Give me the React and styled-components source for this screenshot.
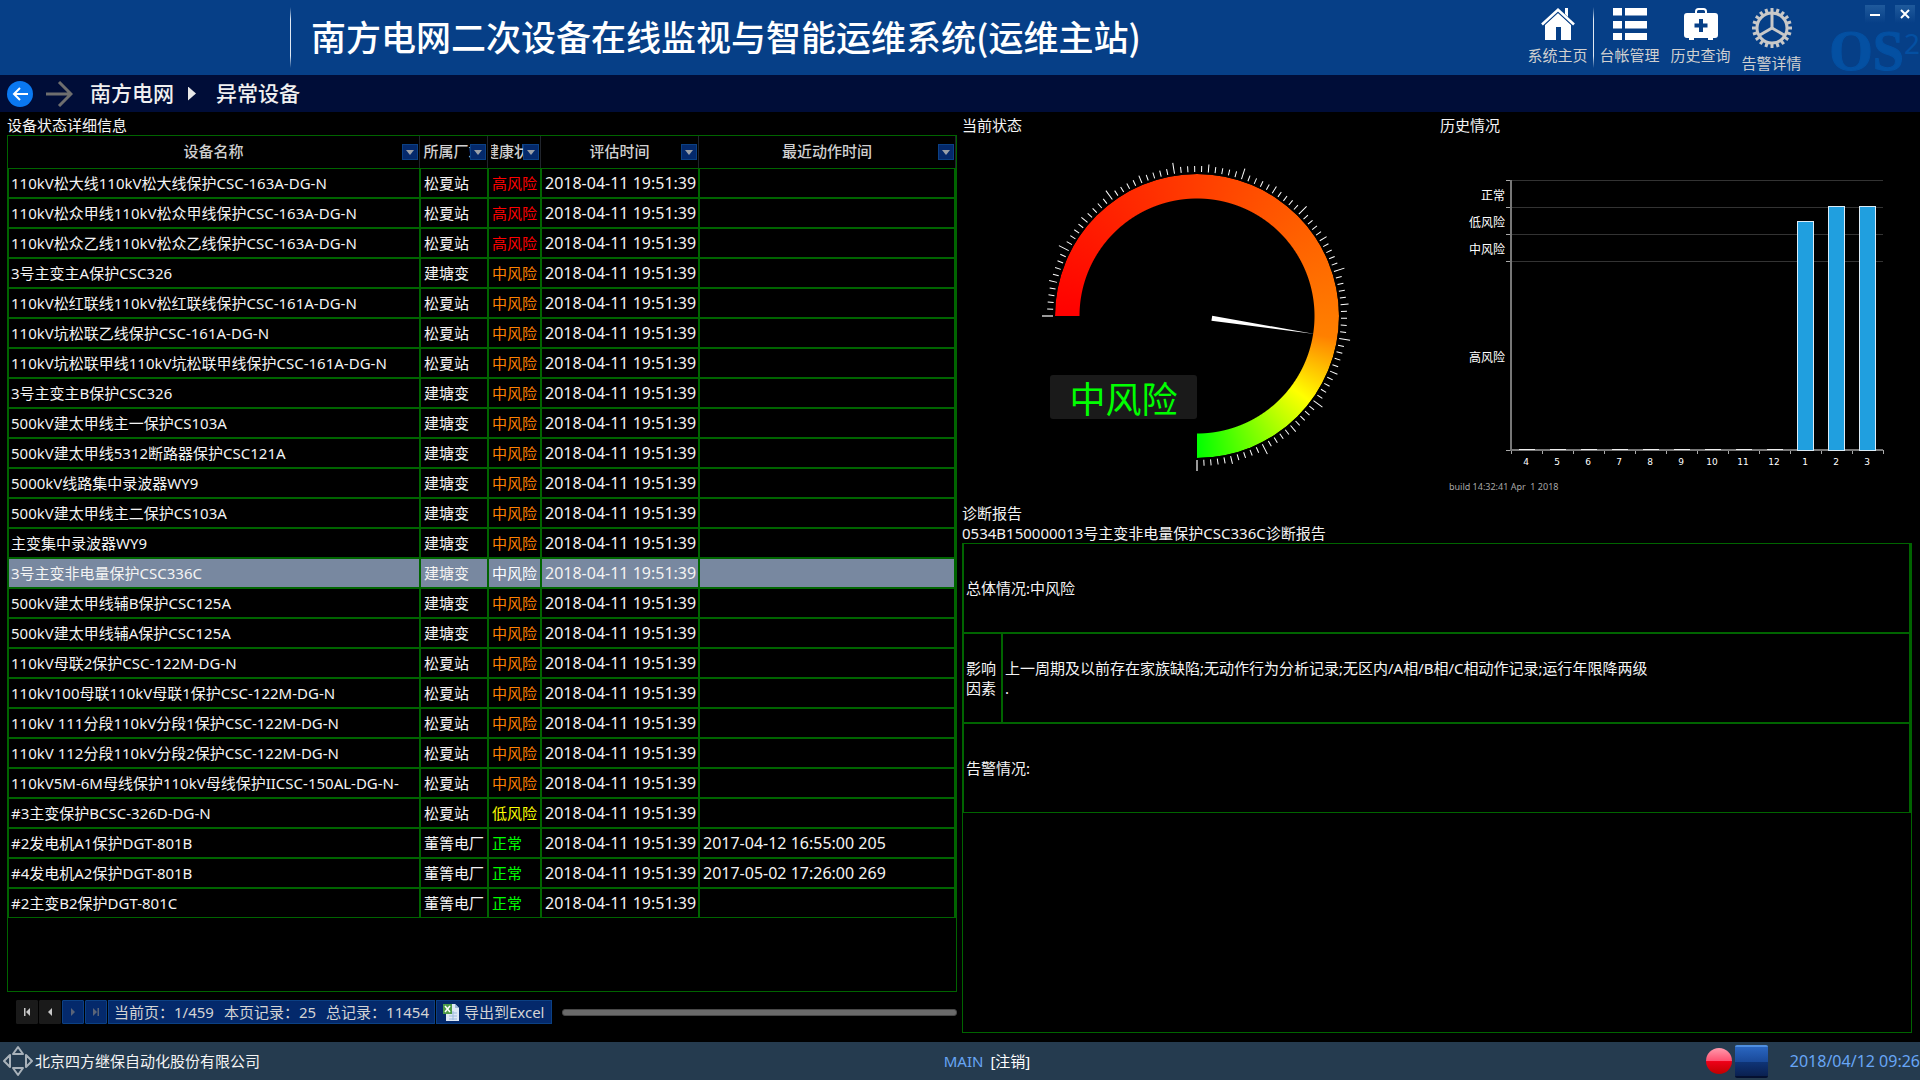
import React from 'react';
import styled, { createGlobalStyle } from 'styled-components';

const sans = "'Noto Sans', 'Noto Sans CJK SC', sans-serif";
const line = '#006400';

const statusColor = {
  高风险: '#ff0000',
  中风险: '#ff8000',
  低风险: '#ffff00',
  正常: '#00ff00',
};

const GlobalStyle = createGlobalStyle`
  * {
    box-sizing: border-box;
  }
  body {
    margin: 0;
    background: #000;
    color: #f4f4f4;
    font-family: ${sans};
    font-size: 15px;
    line-height: 20px;
  }
  button {
    padding: 0;
    border: 0;
    background: none;
    color: inherit;
    font: inherit;
  }
`;

const Page = styled.div`
  display: flex;
  flex-direction: column;
  min-height: 100vh;
`;

const TopBar = styled.header`
  position: relative;
  display: flex;
  align-items: flex-start;
  height: 75px;
  background: #063f87;
`;
const TopDivider = styled.span`
  width: 1px;
  height: 61px;
  margin-top: 7px;
  background: linear-gradient(transparent, #dfe8f2 20%, #dfe8f2 80%, transparent);
`;
const LogoSpace = styled.div`
  width: 290px;
`;
const Title = styled.h1`
  flex: 1;
  margin: 0;
  padding-left: 20px;
  color: #fff;
  font-family: 'Noto Sans CJK SC', sans-serif;
  font-size: 35px;
  font-weight: 500;
  line-height: 71px;
  white-space: nowrap;
`;
const Nav = styled.nav`
  display: flex;
  margin-right: 113px;
`;
const NavLink = styled.a`
  display: flex;
  flex-direction: column;
  align-items: center;
  width: 71px;
  padding-top: 8px;
  color: #d0d0d0;
  text-decoration: none;
  line-height: 30px;
`;
const Watermark = styled.div`
  position: absolute;
  top: 23px;
  right: 0;
  display: flex;
  color: #0450a2;
  font-family: 'Liberation Serif', serif;
  font-size: 56px;
  font-weight: bold;
  line-height: 56px;
  -webkit-text-stroke: 1px #0450a2;
`;
const WatermarkPower = styled.span`
  font-family: ${sans};
  font-size: 28px;
  font-weight: normal;
  line-height: 40px;
  -webkit-text-stroke: 0;
`;
const WindowButtons = styled.div`
  position: absolute;
  top: 5px;
  right: 5px;
  display: flex;
  gap: 10px;
`;
const WindowButton = styled.button`
  display: flex;
  align-items: center;
  justify-content: center;
  width: 20px;
  height: 18px;
  background: linear-gradient(#1f5a9c, #063f87);
`;

const Crumbs = styled.nav`
  display: flex;
  align-items: center;
  height: 37px;
  padding-left: 7px;
  background: #000d38;
  font-family: 'Noto Sans CJK SC', sans-serif;
  font-size: 21px;
  font-weight: 500;
`;
const CrumbButton = styled.button`
  display: flex;
  margin-right: ${(props) => props.$gap}px;
`;
const CrumbLink = styled.a`
  padding-bottom: 4px;
  color: #f0f0f0;
  text-decoration: none;
`;
const CrumbArrow = styled.span`
  width: 8px;
  height: 14px;
  margin: 0 20px 0 14px;
  background: #e8e8e8;
  clip-path: polygon(0 0, 100% 50%, 0 100%);
`;

const Main = styled.main`
  display: grid;
  grid-template-columns: 950fr 950fr;
  gap: 5px;
  flex: 1;
  padding: 3px 8px 9px 7px;
`;
const Column = styled.section`
  display: flex;
  flex-direction: column;
  min-width: 0;
`;
const SectionTitle = styled.h2`
  margin: 0;
  font-size: 15px;
  font-weight: normal;
  line-height: 20px;
`;
const Panel = styled.div`
  flex: 1;
  border: 1px solid ${line};
`;

const DeviceTable = styled.table`
  width: 100%;
  border-spacing: 0;
  table-layout: fixed;
`;
const HeadCell = styled.th`
  height: 32px;
  padding: 0;
  border-right: 1px solid #20242c;
  color: #d0d0d0;
  font-family: 'Noto Sans CJK SC', sans-serif;
  font-weight: 500;
`;
const HeadInner = styled.div`
  position: relative;
  padding: 0 3px;
`;
const HeadText = styled.span`
  display: flex;
  justify-content: center;
  height: 22px;
  overflow: hidden;
  line-height: 20px;
  white-space: nowrap;
`;
const FilterButton = styled.button`
  position: absolute;
  top: 3px;
  right: 1px;
  display: flex;
  align-items: center;
  justify-content: center;
  width: 16px;
  height: 16px;
  border: 1px solid #0b4084;
  background: #04296b;
`;
const Row = styled.tr`
  background: ${(props) => (props.$selected ? '#7888a0' : 'transparent')};
`;
const Cell = styled.td`
  height: 30px;
  padding: 0 3px;
  border: 1px solid ${line};
  overflow: hidden;
  color: ${(props) => props.$color || 'inherit'};
  font-size: ${(props) => (props.$date ? 16 : 15)}px;
  white-space: nowrap;
  &:first-child {
    padding: 0 2px;
  }
  &:last-child {
    border-right-width: 2px;
  }
`;

const Pager = styled.div`
  display: flex;
  align-items: center;
  gap: 1px;
  height: 41px;
  padding: 0 0 1px 9px;
`;
const PagerButton = styled.button`
  display: flex;
  align-items: center;
  justify-content: center;
  width: 22px;
  height: 24px;
  border: 1px solid ${(props) => (props.$off ? '#1a1a1a' : '#0b4084')};
  border-radius: 1px;
  background: ${(props) => (props.$off ? '#1a1a1a' : '#04296b')};
`;
const PagerInfo = styled.span`
  display: flex;
  gap: 10px;
  height: 24px;
  padding: 0 5px;
  border: 1px solid #0b4084;
  background: #04296b;
  color: #d4d4d4;
  line-height: 22px;
  white-space: nowrap;
`;
const ExportButton = styled.button`
  display: flex;
  align-items: center;
  gap: 5px;
  height: 24px;
  padding: 0 6px;
  border: 1px solid #0b4084;
  background: #04296b;
  color: #d4d4d4;
  line-height: 22px;
  white-space: nowrap;
`;
const ScrollTrack = styled.div`
  flex: 1;
  height: 7px;
  margin-left: 9px;
  border: 1px solid #484848;
  border-radius: 3px;
  background: #6a6a6a;
`;

const Charts = styled.div`
  display: grid;
  grid-template-columns: 478fr 472fr;
  height: 388px;
`;
const ChartBox = styled.div`
  min-width: 0;
`;
const Gauge = styled.div`
  display: grid;
  width: 320px;
  height: 320px;
  margin: 21px 0 0 75px;
  > * {
    grid-area: 1 / 1;
  }
`;
const GaugeRing = styled.div`
  width: 284px;
  height: 284px;
  place-self: center;
  border-radius: 50%;
  background: conic-gradient(from 270deg, #ff0000, #ff8000 189deg, #ffff00 217deg, #00ff00 270deg, transparent 270deg);
  mask: radial-gradient(circle, transparent 117px, #000 118px);
`;
const GaugeLabel = styled.div`
  place-self: end start;
  width: 147px;
  height: 44px;
  margin: 0 0 57px 13px;
  border-radius: 3px;
  background: #1a1a1a;
  color: #00ff00;
  font-family: 'Noto Sans CJK SC', sans-serif;
  font-size: 36px;
  line-height: 44px;
  text-align: center;
`;
const ChartSvg = styled.svg`
  display: block;
  margin: 10px 0 0 5px;
`;
const BuildInfo = styled.div`
  margin-top: 6px;
  padding-left: 9px;
  color: #a8a8a8;
  font-size: 9px;
  line-height: 12px;
`;

const Report = styled.table`
  width: 100%;
  border-spacing: 0;
  table-layout: fixed;
`;
const ReportCell = styled.td`
  height: 90px;
  padding: 2px;
  border: 1px solid ${line};
  &:last-child {
    border-right-width: 2px;
  }
  tr:first-child > & {
    height: 89px;
    border-top: 0;
  }
`;

const Footer = styled.footer`
  display: grid;
  grid-template-columns: 1fr auto 1fr;
  align-items: center;
  height: 38px;
  background: #253b4f;
`;
const Company = styled.div`
  display: flex;
  align-items: center;
  gap: 1px;
  padding-left: 2px;
`;
const User = styled.div`
  display: flex;
  gap: 7px;
  padding-left: 54px;
  color: #68a6f6;
`;
const Logout = styled.a`
  color: #fff;
  text-decoration: none;
`;
const StatusArea = styled.div`
  display: flex;
  align-items: center;
  justify-content: flex-end;
`;
const Lamp = styled.span`
  width: 26px;
  height: 26px;
  border-radius: 50%;
  background: linear-gradient(#ff9aac, #ff5070 50%, #ee0018 52%, #c00000);
`;
const Screen = styled.span`
  width: 33px;
  height: 33px;
  margin: 0 22px 0 3px;
  border-top: 2px solid #4f8fe0;
  border-bottom: 2px solid #041030;
  border-radius: 2px;
  background: linear-gradient(#2a66c0, #1a4a9a 50%, #0f3476 52%, #0a2050);
`;
const Clock = styled.time`
  color: #68a6f6;
  font-size: 16px;
`;

const columns = [
  { title: '设备名称', width: '412px' },
  { title: '所属厂站', width: '68px' },
  { title: '健康状态', width: '53px' },
  { title: '评估时间', width: '158px' },
  { title: '最近动作时间', width: 'auto' },
];

const devices = [
  ['110kV松大线110kV松大线保护CSC-163A-DG-N', '松夏站', '高风险'],
  ['110kV松众甲线110kV松众甲线保护CSC-163A-DG-N', '松夏站', '高风险'],
  ['110kV松众乙线110kV松众乙线保护CSC-163A-DG-N', '松夏站', '高风险'],
  ['3号主变主A保护CSC326', '建塘变', '中风险'],
  ['110kV松红联线110kV松红联线保护CSC-161A-DG-N', '松夏站', '中风险'],
  ['110kV坑松联乙线保护CSC-161A-DG-N', '松夏站', '中风险'],
  ['110kV坑松联甲线110kV坑松联甲线保护CSC-161A-DG-N', '松夏站', '中风险'],
  ['3号主变主B保护CSC326', '建塘变', '中风险'],
  ['500kV建太甲线主一保护CS103A', '建塘变', '中风险'],
  ['500kV建太甲线5312断路器保护CSC121A', '建塘变', '中风险'],
  ['5000kV线路集中录波器WY9', '建塘变', '中风险'],
  ['500kV建太甲线主二保护CS103A', '建塘变', '中风险'],
  ['主变集中录波器WY9', '建塘变', '中风险'],
  ['3号主变非电量保护CSC336C', '建塘变', '中风险'],
  ['500kV建太甲线辅B保护CSC125A', '建塘变', '中风险'],
  ['500kV建太甲线辅A保护CSC125A', '建塘变', '中风险'],
  ['110kV母联2保护CSC-122M-DG-N', '松夏站', '中风险'],
  ['110kV100母联110kV母联1保护CSC-122M-DG-N', '松夏站', '中风险'],
  ['110kV 111分段110kV分段1保护CSC-122M-DG-N', '松夏站', '中风险'],
  ['110kV 112分段110kV分段2保护CSC-122M-DG-N', '松夏站', '中风险'],
  ['110kV5M-6M母线保护110kV母线保护IICSC-150AL-DG-N-', '松夏站', '中风险'],
  ['#3主变保护BCSC-326D-DG-N', '松夏站', '低风险'],
  ['#2发电机A1保护DGT-801B', '董箐电厂', '正常', '2017-04-12 16:55:00 205'],
  ['#4发电机A2保护DGT-801B', '董箐电厂', '正常', '2017-05-02 17:26:00 269'],
  ['#2主变B2保护DGT-801C', '董箐电厂', '正常'],
];
const selectedIndex = 13;

const months = [
  ['4', 0],
  ['5', 0],
  ['6', 0],
  ['7', 0],
  ['8', 0],
  ['9', 0],
  ['10', 0],
  ['11', 0],
  ['12', 0],
  ['1', 229],
  ['2', 244],
  ['3', 244],
];
const levels = [
  ['正常', 50],
  ['低风险', 77],
  ['中风险', 104],
  ['高风险', 212],
];

const HomeIcon = () => (
  <svg width="34" height="32" viewBox="0 0 34 32" fill="#fff">
    <path d="M4 17 17 5l13 12v15H20V19h-5v13H4z" />
    <path d="M1 16 17 1.500l16 14.500" fill="none" stroke="#063f87" strokeWidth="5" />
    <path d="M1 16.500 17 1.800l16 14.700" fill="none" stroke="#fff" strokeWidth="2.600" />
    <path d="M24 0h3v9l-3-3z" />
  </svg>
);
const ListIcon = () => (
  <svg width="34" height="32" viewBox="0 0 34 32" fill="#fff">
    {[0, 13, 25].map((y) => (
      <path key={y} d={`M0 ${y}h9v7.500H0zM12 ${y}h22v7.500H12z`} />
    ))}
  </svg>
);
const CaseIcon = () => (
  <svg width="34" height="32" viewBox="0 0 34 32">
    <path d="M12 5V3.500Q12 1 14.500 1h5Q22 1 22 3.500V5" fill="none" stroke="#fff" strokeWidth="2" />
    <path d="M3 5h28q3 0 3 3v19q0 3-3 3h-2v2h-5v-2H10v2H5v-2H3q-3 0-3-3V8q0-3 3-3z" fill="#fff" />
    <path d="M15 11h4v4.500h4.500v4H19V24h-4v-4.500h-4.500v-4H15z" fill="#063f87" />
  </svg>
);
const GearIcon = () => (
  <svg width="40" height="40" viewBox="-20 -20 40 40" stroke="#c8c8c8" fill="none">
    {Array.from({ length: 20 }, (_, i) => (
      <path key={i} d="M0-15.500V-20" strokeWidth="3" transform={`rotate(${i * 18})`} />
    ))}
    <circle r="15" strokeWidth="3" />
    {[0, 120, 240].map((a) => (
      <path key={a} d="M0 0V-14" strokeWidth="3" transform={`rotate(${a})`} />
    ))}
  </svg>
);

const navItems = [
  ['系统主页', HomeIcon],
  ['台帐管理', ListIcon],
  ['历史查询', CaseIcon],
  ['告警详情', GearIcon],
];

const Dial = () => (
  <svg width="320" height="320" viewBox="-160 -160 320 320">
    {Array.from({ length: 101 }, (_, i) => {
      const length = i % 10 === 0 ? 155 : i % 5 === 0 ? 152 : 150;
      const end = i === 0 || i === 100;
      return (
        <path
          key={i}
          d={`M-144 0H-${length}`}
          stroke={end ? '#999' : '#fff'}
          strokeWidth={end ? 2 : 1}
          transform={`rotate(${i * 2.7})`}
        />
      );
    })}
    <path d="M15-2.500 119 0 15 2.500z" fill="#fff" transform="rotate(8.700)" />
  </svg>
);

const HistoryChart = () => (
  <ChartSvg width="460" height="330" viewBox="0 0 460 330">
    <g stroke="#333">
      {[35, 62, 89, 116].map((y) => (
        <path key={y} d={`M66 ${y + 0.5}h372`} />
      ))}
    </g>
    <g stroke="#aaa">
      {[35, 62, 89, 116, 305].map((y) => (
        <path key={y} d={`M61 ${y + 0.5}h5`} />
      ))}
      {Array.from({ length: 13 }, (_, i) => (
        <path key={i} d={`M${66.5 + i * 31} 305v4`} />
      ))}
    </g>
    <path d="M66 35v270h372" fill="none" stroke="#777" strokeWidth="2" />
    {months.map(([, value], i) =>
      value ? (
        <rect key={i} x={73.5 + i * 31} y={305.5 - value} width="16" height={value} fill="#209fdf" stroke="#dcebf5" />
      ) : (
        <path key={i} d={`M${74 + i * 31} 304.500h16`} stroke="#eee" />
      )
    )}
    <g fill="#fff" fontSize="12" fontFamily="'Noto Sans CJK SC', sans-serif" textAnchor="end">
      {levels.map(([text, y]) => (
        <text key={text} x="60" y={y + 5}>{text}</text>
      ))}
    </g>
    <g fill="#fff" fontSize="9" fontFamily="'DejaVu Sans', sans-serif" textAnchor="middle">
      {months.map(([text], i) => (
        <text key={text} x={81 + i * 31} y="320">{text}</text>
      ))}
    </g>
  </ChartSvg>
);

const ExcelIcon = () => (
  <svg width="16" height="18" viewBox="0 0 16 18">
    <path d="M3 1h9l4 4v13H3z" fill="#dfe9f6" />
    <path d="M12 1v4h4" fill="#9db7d8" />
    <path d="M6 10h8M6 13h8M6 16h8M10 8v9" stroke="#9dbbe0" />
    <path d="M0 1h9v10H0z" fill="#4d9a48" />
    <path d="M2 3l5 6M7 3 2 9" stroke="#fff" strokeWidth="1.500" />
  </svg>
);

const pagerButtons = [
  ['首页', 'M0 0h1.500v8H0zM6 0v8L2 4z', true],
  ['上一页', 'M5 0v8L1 4z', true],
  ['下一页', 'M1 0v8L5 4z', false],
  ['末页', 'M0 0v8L4 4zM4.500 0H6v8H4.500z', false],
];

const App = () => {
  return (
    <Page>
      <GlobalStyle />
      <TopBar>
        <LogoSpace />
        <TopDivider />
        <Title>南方电网二次设备在线监视与智能运维系统(运维主站)</Title>
        <Nav>
          {navItems.map(([text, Icon], i) => (
            <React.Fragment key={text}>
              {i === 1 && <TopDivider />}
              <NavLink href="#">
                <Icon />
                {text}
              </NavLink>
            </React.Fragment>
          ))}
        </Nav>
        <Watermark aria-hidden="true">
          OS<WatermarkPower>2</WatermarkPower>
        </Watermark>
        <WindowButtons>
          <WindowButton aria-label="最小化">
            <svg width="10" height="10" stroke="#fff" strokeWidth="2">
              <path d="M0 6h10" />
            </svg>
          </WindowButton>
          <WindowButton aria-label="关闭">
            <svg width="10" height="10" stroke="#fff" strokeWidth="2">
              <path d="M1 1l8 8M9 1 1 9" />
            </svg>
          </WindowButton>
        </WindowButtons>
      </TopBar>

      <Crumbs>
        <CrumbButton aria-label="后退" $gap={13}>
          <svg width="26" height="26" fill="none">
            <circle cx="13" cy="13" r="13" fill="#0a78f0" />
            <path d="M21 13H7M13 7l-6 6 6 6" stroke="#fff" strokeWidth="2" />
          </svg>
        </CrumbButton>
        <CrumbButton aria-label="前进" $gap={17}>
          <svg width="27" height="26" fill="none">
            <path d="M0 13h25M13 1l12 12-12 12" stroke="#6e6e6e" strokeWidth="3" />
          </svg>
        </CrumbButton>
        <CrumbLink href="#">南方电网</CrumbLink>
        <CrumbArrow />
        <CrumbLink href="#">异常设备</CrumbLink>
      </Crumbs>

      <Main>
        <Column>
          <SectionTitle>设备状态详细信息</SectionTitle>
          <Panel>
            <DeviceTable>
              <colgroup>
                {columns.map(({ title, width }) => (
                  <col key={title} style={{ width }} />
                ))}
              </colgroup>
              <thead>
                <tr>
                  {columns.map(({ title }) => (
                    <HeadCell key={title}>
                      <HeadInner>
                        <HeadText>{title}</HeadText>
                        <FilterButton aria-label={`筛选${title}`}>
                          <svg width="8" height="5" fill="#9aa0a8">
                            <path d="M0 0h8L4 5z" />
                          </svg>
                        </FilterButton>
                      </HeadInner>
                    </HeadCell>
                  ))}
                </tr>
              </thead>
              <tbody>
                {devices.map(([name, station, status, lastAction], i) => (
                  <Row key={name} $selected={i === selectedIndex}>
                    <Cell>{name}</Cell>
                    <Cell>{station}</Cell>
                    <Cell $color={i === selectedIndex ? '#fff' : statusColor[status]}>{status}</Cell>
                    <Cell $date>2018-04-11 19:51:39</Cell>
                    <Cell $date>{lastAction}</Cell>
                  </Row>
                ))}
              </tbody>
            </DeviceTable>
          </Panel>
          <Pager>
            {pagerButtons.map(([label, path, off]) => (
              <PagerButton key={label} aria-label={label} $off={off}>
                <svg width="6" height="8" fill={off ? '#c8c8c8' : '#5a6478'}>
                  <path d={path} />
                </svg>
              </PagerButton>
            ))}
            <PagerInfo>
              <span>当前页：1/459</span>
              <span>本页记录：25</span>
              <span>总记录：11454</span>
            </PagerInfo>
            <ExportButton>
              <ExcelIcon />
              导出到Excel
            </ExportButton>
            <ScrollTrack />
          </Pager>
        </Column>

        <Column>
          <Charts>
            <ChartBox>
              <SectionTitle>当前状态</SectionTitle>
              <Gauge>
                <GaugeRing />
                <Dial />
                <GaugeLabel>中风险</GaugeLabel>
              </Gauge>
            </ChartBox>
            <ChartBox>
              <SectionTitle>历史情况</SectionTitle>
              <HistoryChart />
              <BuildInfo>build 14:32:41 Apr&nbsp; 1 2018</BuildInfo>
            </ChartBox>
          </Charts>
          <SectionTitle>诊断报告</SectionTitle>
          <SectionTitle>0534B150000013号主变非电量保护CSC336C诊断报告</SectionTitle>
          <Panel>
            <Report>
              <colgroup>
                <col style={{ width: 39 }} />
                <col />
              </colgroup>
              <tbody>
                <tr>
                  <ReportCell colSpan="2">总体情况:中风险</ReportCell>
                </tr>
                <tr>
                  <ReportCell>影响因素</ReportCell>
                  <ReportCell>
                    上一周期及以前存在家族缺陷;无动作行为分析记录;无区内/A相/B相/C相动作记录;运行年限降两级
                    <br />.
                  </ReportCell>
                </tr>
                <tr>
                  <ReportCell colSpan="2">告警情况:</ReportCell>
                </tr>
              </tbody>
            </Report>
          </Panel>
        </Column>
      </Main>

      <Footer>
        <Company>
          <svg width="32" height="32" viewBox="0 0 32 32" fill="none" stroke="#a9b2ba" strokeWidth="2">
            <path d="M16 2l5 7H11zM16 30l5-7H11zM2 16l6-6v12zM30 16l-6-6v12z" strokeLinejoin="round" />
          </svg>
          北京四方继保自动化股份有限公司
        </Company>
        <User>
          MAIN
          <Logout href="#">[注销]</Logout>
        </User>
        <StatusArea>
          <Lamp />
          <Screen />
          <Clock>2018/04/12 09:26</Clock>
        </StatusArea>
      </Footer>
    </Page>
  );
};

export default App;
